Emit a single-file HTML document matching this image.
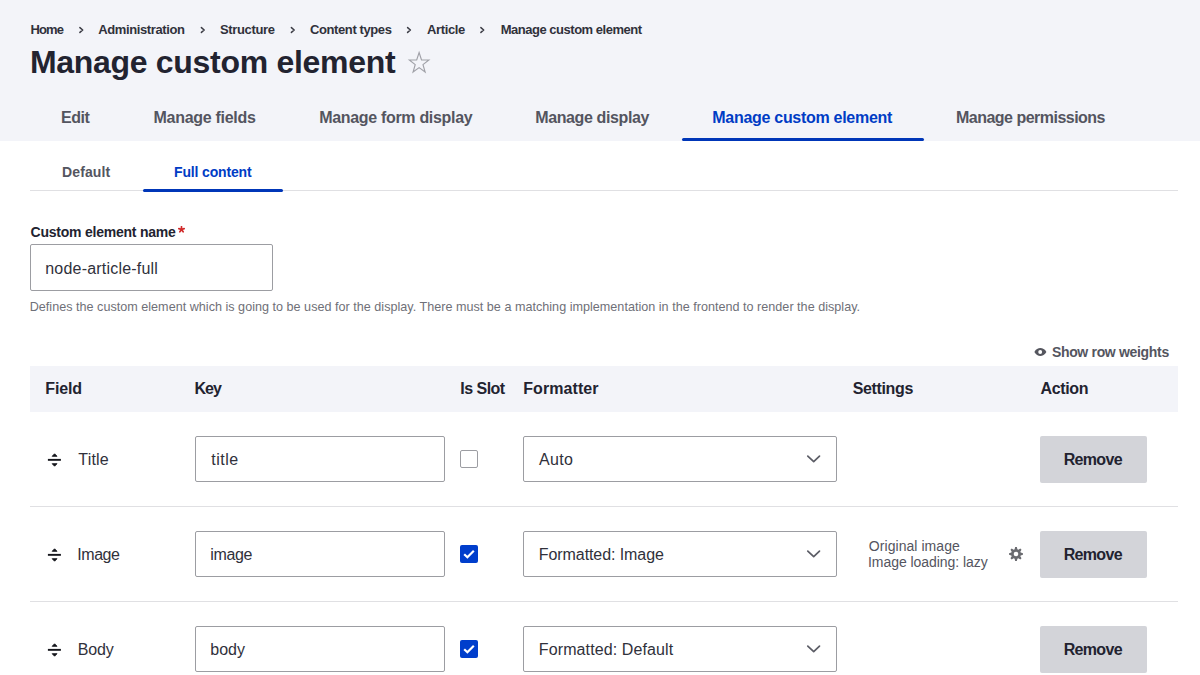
<!DOCTYPE html>
<html><head><meta charset="utf-8">
<style>
*{box-sizing:border-box;margin:0;padding:0}
html,body{width:1200px;height:675px;overflow:hidden;background:#fff}
body{font-family:"Liberation Sans",sans-serif;color:#222330;position:relative}
.a{position:absolute}
.t{position:absolute;white-space:nowrap;line-height:1}
.box{position:absolute;border:1px solid #9c9da2;border-radius:2px;background:#fff}
.btn{position:absolute;background:#d3d4d9;border-radius:2px}
.cb{position:absolute;width:18px;height:18px;border-radius:2px;border:1px solid #9c9da2;background:#fff}
.line{position:absolute;height:1px;background:#e0e0e3}
</style></head><body>
<div class="a" style="left:0;top:0;width:1200px;height:141px;background:#f3f4f9"></div>
<svg class="a" style="left:0;top:0" width="700" height="45">
<g fill="none" stroke="#3b3c45" stroke-width="1.5" stroke-linecap="round" stroke-linejoin="round">
<path d="M79.9 27.6 L82.7 30 L79.9 32.4"/>
<path d="M201.4 27.6 L204.2 30 L201.4 32.4"/>
<path d="M291.4 27.6 L294.2 30 L291.4 32.4"/>
<path d="M407.6 27.6 L410.4 30 L407.6 32.4"/>
<path d="M480.9 27.6 L483.7 30 L480.9 32.4"/>
</g></svg>
<svg class="a" style="left:400.4px;top:45px" width="40" height="35"><path d="M19.10 7.50 L21.51 14.81 L28.86 14.96 L23.00 19.63 L25.13 27.04 L19.10 22.62 L13.07 27.04 L15.20 19.63 L9.34 14.96 L16.69 14.81Z" fill="none" stroke="#a0a1a8" stroke-width="1.15" stroke-linejoin="miter"/></svg>
<div class="a" style="left:682px;top:137.5px;width:242px;height:3.5px;border-radius:2px;background:#0036b8"></div>

<div class="line" style="left:30px;top:190px;width:1148px"></div>
<div class="a" style="left:142.5px;top:188.5px;width:140.5px;height:3.5px;border-radius:2px;background:#0036b8"></div>

<svg class="a" style="left:178.2px;top:226px" width="7" height="7" viewBox="0 0 7 7"><path d="M3.50 3.50 L3.50 0.70 M3.50 3.50 L6.16 2.63 M3.50 3.50 L5.15 5.77 M3.50 3.50 L1.85 5.77 M3.50 3.50 L0.84 2.63" stroke="#d12a2a" stroke-width="1.7" stroke-linecap="round"/></svg>
<div class="box" style="left:30px;top:244px;width:243px;height:47px"></div>

<svg class="a" style="left:1033.5px;top:347px" width="13" height="10" viewBox="0 0 13 10"><path d="M0.4 5C1.9 2.2 4.1 1.1 6.3 1.1S10.9 2.2 12.4 5C10.9 7.8 8.5 8.9 6.3 8.9S1.9 7.8 0.4 5Z" fill="#55565e"/><circle cx="6.2" cy="5" r="1.95" fill="#fff"/></svg>

<div class="a" style="left:30px;top:366px;width:1148px;height:46px;background:#f3f4f9"></div>
<svg class="a" style="left:47px;top:452px" width="15" height="16" viewBox="0 0 15 16"><path d="M7.6 1.8 L10 4.3 L5.2 4.3 Z M7.6 14.2 L10 11.7 L5.2 11.7 Z" fill="#15161c" stroke="#15161c" stroke-width="0.9" stroke-linejoin="round"/><rect x="0.9" y="6.9" width="13" height="1.9" fill="#15161c"/></svg>
<div class="box" style="left:195px;top:436px;width:250px;height:46px"></div>
<div class="cb" style="left:460px;top:450px"></div>
<div class="box" style="left:523px;top:436px;width:314px;height:46px"></div>
<svg class="a" style="left:806px;top:453px" width="16" height="12" viewBox="0 0 16 12"><path d="M1.8 3.1 L7.7 8.7 L13.5 3.1" fill="none" stroke="#5c5d66" stroke-width="1.7" stroke-linecap="round" stroke-linejoin="round"/></svg>
<div class="btn" style="left:1040px;top:436px;width:107px;height:47px"></div>
<div class="line" style="left:30px;top:506px;width:1148px"></div>
<svg class="a" style="left:47px;top:547px" width="15" height="16" viewBox="0 0 15 16"><path d="M7.6 1.8 L10 4.3 L5.2 4.3 Z M7.6 14.2 L10 11.7 L5.2 11.7 Z" fill="#15161c" stroke="#15161c" stroke-width="0.9" stroke-linejoin="round"/><rect x="0.9" y="6.9" width="13" height="1.9" fill="#15161c"/></svg>
<div class="box" style="left:195px;top:531px;width:250px;height:46px"></div>
<svg class="a" style="left:460px;top:545px" width="18" height="18" viewBox="0 0 18 18"><rect width="18" height="18" rx="2" fill="#003ecc"/><path d="M4.2 9.2 L7.4 12.2 L13.8 5.8" fill="none" stroke="#fff" stroke-width="2.2"/></svg>
<div class="box" style="left:523px;top:531px;width:314px;height:46px"></div>
<svg class="a" style="left:806px;top:548px" width="16" height="12" viewBox="0 0 16 12"><path d="M1.8 3.1 L7.7 8.7 L13.5 3.1" fill="none" stroke="#5c5d66" stroke-width="1.7" stroke-linecap="round" stroke-linejoin="round"/></svg>
<svg class="a" style="left:1008.2px;top:546px" width="16" height="16" viewBox="0 0 16 16"><path fill="#6a6b70" d="M6.61 3.30 L7.15 1.05 L8.85 1.05 L9.39 3.30 L10.34 3.69 L12.31 2.48 L13.52 3.69 L12.31 5.66 L12.70 6.61 L14.95 7.15 L14.95 8.85 L12.70 9.39 L12.31 10.34 L13.52 12.31 L12.31 13.52 L10.34 12.31 L9.39 12.70 L8.85 14.95 L7.15 14.95 L6.61 12.70 L5.66 12.31 L3.69 13.52 L2.48 12.31 L3.69 10.34 L3.30 9.39 L1.05 8.85 L1.05 7.15 L3.30 6.61 L3.69 5.66 L2.48 3.69 L3.69 2.48 L5.66 3.69Z"/><circle cx="8" cy="8" r="2.3" fill="#fff"/></svg>
<div class="btn" style="left:1040px;top:531px;width:107px;height:47px"></div>
<div class="line" style="left:30px;top:601px;width:1148px"></div>
<svg class="a" style="left:47px;top:642px" width="15" height="16" viewBox="0 0 15 16"><path d="M7.6 1.8 L10 4.3 L5.2 4.3 Z M7.6 14.2 L10 11.7 L5.2 11.7 Z" fill="#15161c" stroke="#15161c" stroke-width="0.9" stroke-linejoin="round"/><rect x="0.9" y="6.9" width="13" height="1.9" fill="#15161c"/></svg>
<div class="box" style="left:195px;top:626px;width:250px;height:46px"></div>
<svg class="a" style="left:460px;top:640px" width="18" height="18" viewBox="0 0 18 18"><rect width="18" height="18" rx="2" fill="#003ecc"/><path d="M4.2 9.2 L7.4 12.2 L13.8 5.8" fill="none" stroke="#fff" stroke-width="2.2"/></svg>
<div class="box" style="left:523px;top:626px;width:314px;height:46px"></div>
<svg class="a" style="left:806px;top:643px" width="16" height="12" viewBox="0 0 16 12"><path d="M1.8 3.1 L7.7 8.7 L13.5 3.1" fill="none" stroke="#5c5d66" stroke-width="1.7" stroke-linecap="round" stroke-linejoin="round"/></svg>
<div class="btn" style="left:1040px;top:626px;width:107px;height:47px"></div>
<span class="t" style="left:30.5px;top:23.3px;font-size:13px;font-weight:bold;color:#30313b;letter-spacing:-0.896px">Home</span>
<span class="t" style="left:98.3px;top:23.3px;font-size:13px;font-weight:bold;color:#30313b;letter-spacing:-0.391px">Administration</span>
<span class="t" style="left:220px;top:23.3px;font-size:13px;font-weight:bold;color:#30313b;letter-spacing:-0.357px">Structure</span>
<span class="t" style="left:310px;top:23.3px;font-size:13px;font-weight:bold;color:#30313b;letter-spacing:-0.395px">Content types</span>
<span class="t" style="left:427px;top:23.3px;font-size:13px;font-weight:bold;color:#30313b;letter-spacing:-0.372px">Article</span>
<span class="t" style="left:500.75px;top:23.3px;font-size:13px;font-weight:bold;color:#30313b;letter-spacing:-0.485px">Manage custom element</span>
<span class="t" style="left:29.9px;top:46.21px;font-size:32px;font-weight:bold;color:#222330;letter-spacing:-0.295px">Manage custom element</span>
<span class="t" style="left:60.9px;top:109.76px;font-size:16px;font-weight:bold;color:#545560;letter-spacing:-0.397px">Edit</span>
<span class="t" style="left:153.5px;top:109.76px;font-size:16px;font-weight:bold;color:#545560;letter-spacing:-0.284px">Manage fields</span>
<span class="t" style="left:319.2px;top:109.76px;font-size:16px;font-weight:bold;color:#545560;letter-spacing:-0.317px">Manage form display</span>
<span class="t" style="left:535.25px;top:109.76px;font-size:16px;font-weight:bold;color:#545560;letter-spacing:-0.385px">Manage display</span>
<span class="t" style="left:712.3px;top:109.76px;font-size:16px;font-weight:bold;color:#003cc5;letter-spacing:-0.29px">Manage custom element</span>
<span class="t" style="left:956px;top:109.76px;font-size:16px;font-weight:bold;color:#545560;letter-spacing:-0.516px">Manage permissions</span>
<span class="t" style="left:62px;top:165.45px;font-size:14px;font-weight:bold;color:#545560;letter-spacing:0.119px">Default</span>
<span class="t" style="left:174px;top:165.45px;font-size:14px;font-weight:bold;color:#003cc5;letter-spacing:-0.151px">Full content</span>
<span class="t" style="left:30.5px;top:225.45px;font-size:14px;font-weight:bold;color:#222330;letter-spacing:-0.227px">Custom element name</span>
<span class="t" style="left:45.25px;top:260.76px;font-size:16px;font-weight:normal;color:#30313b;letter-spacing:0.198px">node-article-full</span>
<span class="t" style="left:29.7px;top:300.63px;font-size:12.6px;font-weight:normal;color:#6f7078;letter-spacing:0.015px">Defines the custom element which is going to be used for the display. There must be a matching implementation in the frontend to render the display.</span>
<span class="t" style="left:1051.9px;top:345.45px;font-size:14px;font-weight:bold;color:#545560;letter-spacing:-0.322px">Show row weights</span>
<span class="t" style="left:45.3px;top:380.76px;font-size:16px;font-weight:bold;color:#222330;letter-spacing:-0.141px">Field</span>
<span class="t" style="left:194.5px;top:380.76px;font-size:16px;font-weight:bold;color:#222330;letter-spacing:-0.977px">Key</span>
<span class="t" style="left:460.3px;top:380.76px;font-size:16px;font-weight:bold;color:#222330;letter-spacing:-0.53px">Is Slot</span>
<span class="t" style="left:523.2px;top:380.76px;font-size:16px;font-weight:bold;color:#222330;letter-spacing:0.081px">Formatter</span>
<span class="t" style="left:852.75px;top:380.76px;font-size:16px;font-weight:bold;color:#222330;letter-spacing:-0.367px">Settings</span>
<span class="t" style="left:1040.5px;top:380.76px;font-size:16px;font-weight:bold;color:#222330;letter-spacing:-0.36px">Action</span>
<span class="t" style="left:78.3px;top:451.76px;font-size:16px;font-weight:normal;color:#30313b;letter-spacing:0.179px">Title</span>
<span class="t" style="left:211.25px;top:451.76px;font-size:16px;font-weight:normal;color:#30313b;letter-spacing:0.513px">title</span>
<span class="t" style="left:539px;top:451.76px;font-size:16px;font-weight:normal;color:#30313b;letter-spacing:0.328px">Auto</span>
<span class="t" style="left:1063.7px;top:451.76px;font-size:16px;font-weight:bold;color:#222330;letter-spacing:-0.67px">Remove</span>
<span class="t" style="left:77.3px;top:546.76px;font-size:16px;font-weight:normal;color:#30313b;letter-spacing:-0.468px">Image</span>
<span class="t" style="left:210.3px;top:546.76px;font-size:16px;font-weight:normal;color:#30313b;letter-spacing:-0.37px">image</span>
<span class="t" style="left:538.8px;top:546.76px;font-size:16px;font-weight:normal;color:#30313b;letter-spacing:-0.078px">Formatted: Image</span>
<span class="t" style="left:1063.7px;top:546.76px;font-size:16px;font-weight:bold;color:#222330;letter-spacing:-0.67px">Remove</span>
<span class="t" style="left:77.7px;top:641.76px;font-size:16px;font-weight:normal;color:#30313b;letter-spacing:-0.156px">Body</span>
<span class="t" style="left:210.3px;top:641.76px;font-size:16px;font-weight:normal;color:#30313b;letter-spacing:0.002px">body</span>
<span class="t" style="left:538.8px;top:641.76px;font-size:16px;font-weight:normal;color:#30313b;letter-spacing:0.111px">Formatted: Default</span>
<span class="t" style="left:1063.7px;top:641.76px;font-size:16px;font-weight:bold;color:#222330;letter-spacing:-0.67px">Remove</span>
<span class="t" style="left:868.8px;top:539.45px;font-size:14px;font-weight:normal;color:#545560;letter-spacing:0.056px">Original image</span>
<span class="t" style="left:868px;top:555.45px;font-size:14px;font-weight:normal;color:#545560;letter-spacing:-0.049px">Image loading: lazy</span>
</body></html>
